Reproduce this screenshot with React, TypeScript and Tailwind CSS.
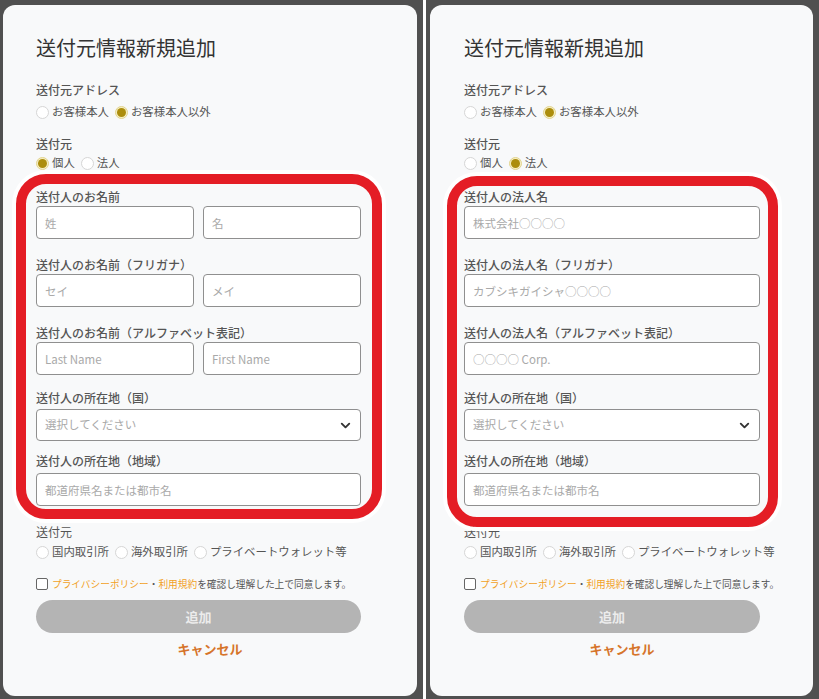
import { ChevronDown } from "lucide-react";

type Mode = "individual" | "corporate";

function Radio({ label, checked }: { label: string; checked?: boolean }) {
  return (
    <label className="flex items-center gap-[3px] whitespace-nowrap">
      {checked ? (
        <span className="flex h-[13px] w-[13px] items-center justify-center rounded-full border border-[#e2d48e] bg-[#f6efc6]">
          <span className="h-[9px] w-[9px] rounded-full bg-[#ac8d0c]" />
        </span>
      ) : (
        <span className="h-[13px] w-[13px] rounded-full border border-[#d6d6d6] bg-white" />
      )}
      <span>{label}</span>
    </label>
  );
}

function Label({ children, className = "" }: { children: React.ReactNode; className?: string }) {
  return <div className={`h-4 text-[12px] leading-4 font-medium text-[#555] whitespace-nowrap ${className}`}>{children}</div>;
}

function Field({ placeholder, className = "" }: { placeholder: string; className?: string }) {
  return (
    <input
      placeholder={placeholder}
      className={`h-[33px] w-full rounded-[4px] border-[1.5px] border-[#8f8f8f] bg-white px-2 text-[11.5px] outline-none placeholder:text-[#a9a9a9] ${className}`}
    />
  );
}

function Card({ mode, inputWidth, outerWidth }: { mode: Mode; inputWidth: number; outerWidth: number }) {
  const corp = mode === "corporate";
  return (
    <div className="flex flex-col" style={{ width: outerWidth }}>
      <h1 className="mt-[29px] h-7 text-[20px] leading-7 text-[#333] whitespace-nowrap">送付元情報新規追加</h1>

      <Label className="mt-5">送付元アドレス</Label>
      <div className="mt-[6px] flex h-4 items-center gap-[6px] text-[11.4px] text-[#555]">
        <Radio label="お客様本人" />
        <Radio label="お客様本人以外" checked />
      </div>

      <Label className="mt-4">送付元</Label>
      <div className="mt-[3px] flex h-4 items-center gap-[6px] text-[11.4px] text-[#555]">
        <Radio label="個人" checked={!corp} />
        <Radio label="法人" checked={corp} />
      </div>

      <div style={{ width: inputWidth }}>
        {corp ? (
          <>
            <Label className="mt-[18px]">送付人の法人名</Label>
            <Field className="mt-[1px]" placeholder="株式会社○○○○" />
            <Label className="mt-[18px]">送付人の法人名（フリガナ）</Label>
            <Field className="mt-[1px]" placeholder="カブシキガイシャ○○○○" />
            <Label className="mt-[18px]">送付人の法人名（アルファベット表記）</Label>
            <Field className="mt-[1px] h-8" placeholder="○○○○ Corp." />
          </>
        ) : (
          <>
            <Label className="mt-[18px]">送付人のお名前</Label>
            <div className="mt-[1px] grid grid-cols-2 gap-[9px]">
              <Field placeholder="姓" />
              <Field placeholder="名" />
            </div>
            <Label className="mt-[18px]">送付人のお名前（フリガナ）</Label>
            <div className="mt-[1px] grid grid-cols-2 gap-[9px]">
              <Field placeholder="セイ" />
              <Field placeholder="メイ" />
            </div>
            <Label className="mt-[18px]">送付人のお名前（アルファベット表記）</Label>
            <div className="mt-[1px] grid grid-cols-2 gap-[9px]">
              <Field className="h-8" placeholder="Last Name" />
              <Field className="h-8" placeholder="First Name" />
            </div>
          </>
        )}

        <Label className="mt-[15px]">送付人の所在地（国）</Label>
        <div className="mt-[3px] flex h-8 items-center justify-between rounded-[4px] border-[1.5px] border-[#8f8f8f] bg-white pl-2 pr-[7px] text-[11.5px] text-[#a9a9a9]">
          <span>選択してください</span>
          <ChevronDown size={15} strokeWidth={3} className="text-[#333]" />
        </div>

        <Label className="mt-3">送付人の所在地（地域）</Label>
        <Field className="mt-1 h-8" placeholder="都道府県名または都市名" />
      </div>

      <Label className="mt-[18px] font-normal">送付元</Label>
      <div className="mt-1 flex h-4 items-center gap-[6px] text-[11.4px] text-[#555]">
        <Radio label="国内取引所" />
        <Radio label="海外取引所" />
        <Radio label="プライベートウォレット等" />
      </div>

      <div className="mt-[16px] flex h-4 items-center gap-1 whitespace-nowrap text-[9.7px] text-[#555]">
        <span className="h-3 w-3 shrink-0 rounded-[2px] border-[1.5px] border-[#666] bg-white" />
        <span>
          <span className="text-[#f2a126]">プライバシーポリシー</span>・<span className="text-[#f2a126]">利用規約</span>を確認し理解した上で同意します。
        </span>
      </div>

      <button
        className="mt-2 flex h-[33px] items-center justify-center rounded-full bg-[#b4b4b4] text-[13px] font-bold text-[#ececec]"
        style={{ width: inputWidth }}
      >
        追加
      </button>
      <div className="mt-[7px] h-[18px] text-center text-[13px] leading-[18px] font-bold text-[#d6742a]">キャンセル</div>
    </div>
  );
}

function Panel({
  mode,
  width,
  cardWidth,
  padLeft,
  contentLeft,
  inputWidth,
  outerWidth,
  highlight,
}: {
  mode: Mode;
  width: number;
  cardWidth: number;
  padLeft: number;
  contentLeft: number;
  inputWidth: number;
  outerWidth: number;
  highlight: { left: number; top: number; width: number; height: number };
}) {
  return (
    <div className="h-full shrink-0 bg-[#505050] pt-[5px]" style={{ width, paddingLeft: padLeft }}>
      <div className="relative h-[691px] overflow-hidden rounded-[12px] bg-[#f8f9fa]" style={{ width: cardWidth, paddingLeft: contentLeft }}>
        <Card mode={mode} inputWidth={inputWidth} outerWidth={outerWidth} />
        <div
          className="pointer-events-none absolute rounded-[30px] border-[10px] border-[#e41d25] shadow-[0_0_0_4px_white]"
          style={highlight}
        />
      </div>
    </div>
  );
}

export default function App() {
  return (
    <div className="flex h-[699px] w-[819px] overflow-hidden bg-white font-['Noto_Sans_CJK_JP','Noto_Sans',sans-serif]">
      <Panel
        mode="individual"
        width={423}
        cardWidth={414}
        padLeft={3}
        contentLeft={33}
        inputWidth={325}
        outerWidth={348}
        highlight={{ left: 13, top: 169, width: 366, height: 345 }}
      />
      <div className="w-[3px] shrink-0 bg-white" />
      <Panel
        mode="corporate"
        width={393}
        cardWidth={383}
        padLeft={4}
        contentLeft={34}
        inputWidth={296}
        outerWidth={316}
        highlight={{ left: 17, top: 171, width: 331, height: 351 }}
      />
    </div>
  );
}
